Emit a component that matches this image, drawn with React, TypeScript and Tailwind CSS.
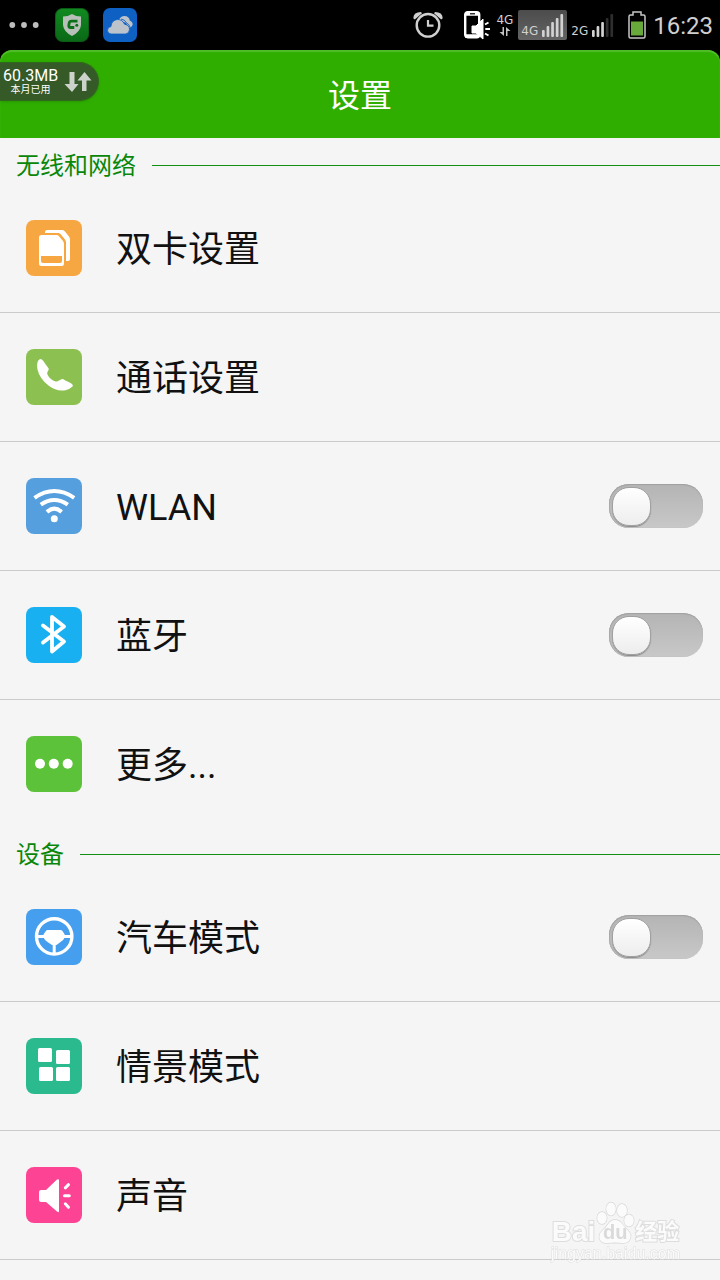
import { ReactNode } from "react";

type Item = {
  id: string;
  label: string;
  color: string;
  icon: ReactNode;
  toggle?: boolean;
};

type Group = { title: string; items: Item[] };

const groups: Group[] = [
  {
    title: "无线和网络",
    items: [
      {
        id: "dual-sim",
        label: "双卡设置",
        color: "bg-[#f7a741]",
        icon: (
          <>
            <path
              d="M19 13V12Q19 10 21 10H36.5Q38 10 39 11.5L43 16.5Q44 18 44 19.5V39Q44 41 42 41H40V22.5Q40 21 39 19.5L34.5 14Q33.5 13 32 13Z"
              fill="#fff"
            />
            <path
              d="M15.5 15H30.5Q32 15 33 16.2L37 21Q38 22.3 38 24V43.5Q38 46 35.5 46H15.5Q13 46 13 43.500V17.5Q13 15 15.500 15Z"
              fill="#fff"
            />
            <path d="M15 36H36V41Q36 43 34 43H17Q15 43 15 41Z" fill="#f7a741" />
          </>
        ),
      },
      {
        id: "call",
        label: "通话设置",
        color: "bg-[#8cc152]",
        icon: (
          <path
            d="M12 12Q13.500 9.500 15.500 10.200Q17.500 11.500 19 14.500L22.700 19.500Q23 21 21.700 22.500Q20.500 24 21.700 26Q24 30.500 29 32.200Q31 33 32.500 31.800L35.500 30.200Q37 29.500 38.500 31L45 34.200Q47.700 36 46.500 37.600Q44 40.200 39.500 41.200Q31 43 22.500 36.500Q13.500 29.500 11.500 20.500Q10.500 15 12 12Z"
            fill="#fff"
          />
        ),
      },
      {
        id: "wlan",
        label: "WLAN",
        color: "bg-[#569fde]",
        toggle: true,
        icon: (
          <g fill="none" stroke="#fff" strokeWidth="4">
            <path d="M8.500 19.800Q28.300 6.200 48.200 19.800" />
            <path d="M14.800 26.700Q28.300 17.300 41.800 26.700" />
            <path d="M21 34Q28.300 27.300 35.600 34" />
            <circle cx="28.300" cy="40.700" r="3.500" fill="#fff" stroke="none" />
          </g>
        ),
      },
      {
        id: "bluetooth",
        label: "蓝牙",
        color: "bg-[#19b0f1]",
        toggle: true,
        icon: (
          <path
            d="M17 18.500L38 34.500L26 44.500V10L38 19.500L17 35.500"
            fill="none"
            stroke="#fff"
            strokeWidth="3.800"
            strokeLinecap="round"
            strokeLinejoin="round"
          />
        ),
      },
      {
        id: "more",
        label: "更多...",
        color: "bg-[#5cc239]",
        icon: (
          <g fill="#fff">
            <circle cx="14" cy="27.800" r="5" />
            <circle cx="27.800" cy="27.800" r="5" />
            <circle cx="41.700" cy="27.800" r="5" />
          </g>
        ),
      },
    ],
  },
  {
    title: "设备",
    items: [
      {
        id: "car",
        label: "汽车模式",
        color: "bg-[#459eee]",
        toggle: true,
        icon: (
          <>
            <g fill="none" stroke="#fff">
              <circle cx="28.200" cy="27.400" r="17.700" strokeWidth="3.400" />
              <path d="M11 27.500H46M28.200 30V45" strokeWidth="3" />
            </g>
            <path
              d="M21.500 21H34.700Q36.200 21 37 22.800L38.700 25.500V28.500Q37.500 31.500 34.500 33L30.500 36H26L21.500 33Q18.500 31 17.500 28.500V25.500L19.300 22.800Q20 21 21.500 21Z"
              fill="#fff"
            />
          </>
        ),
      },
      {
        id: "profiles",
        label: "情景模式",
        color: "bg-[#2aba8e]",
        icon: (
          <g fill="#fff">
            <rect x="12" y="10" width="14" height="14" rx="1.500" />
            <rect x="30" y="12" width="14" height="14" rx="1.500" />
            <rect x="13" y="29" width="14" height="14" rx="1.500" />
            <rect x="30" y="29" width="14" height="14" rx="1.500" />
          </g>
        ),
      },
      {
        id: "sound",
        label: "声音",
        color: "bg-[#fd4393]",
        icon: (
          <>
            <path
              d="M15 23H20L31 12.500Q33 11.500 33 13.500V44Q33 46 31 44.500L20 35H15Q13 35 13 33V25Q13 23 15 23Z"
              fill="#fff"
            />
            <path
              d="M39.300 20.800L42.500 17.700M38.500 28.700H43.300M39.300 36.800L42.500 40.200"
              stroke="#fff"
              strokeWidth="3"
              strokeLinecap="round"
            />
          </>
        ),
      },
    ],
  },
];

function SignalBars({ active }: { active: number }) {
  return (
    <svg width="22" height="24" viewBox="0 0 22 24" aria-hidden="true">
      {[7, 11, 15, 19, 23].map((h, i) => (
        <rect
          key={h}
          x={i * 4.6}
          y={24 - h}
          width="2.700"
          height={h}
          rx="1"
          fill={i < active ? "#d2d2d2" : "#2e2e2e"}
        />
      ))}
    </svg>
  );
}

function StatusBar() {
  return (
    <div className="flex h-[50px] items-center justify-between bg-black pr-[7px] pl-2 text-[#d0d0d0]">
      <div className="flex items-center gap-[14px]">
        <svg width="33" height="34" viewBox="0 0 33 34" aria-hidden="true">
          <g fill="#bdbdbd">
            <circle cx="4.300" cy="17" r="2.900" />
            <circle cx="16" cy="17" r="2.900" />
            <circle cx="27.700" cy="17" r="2.900" />
          </g>
        </svg>
        <svg width="34" height="34" viewBox="0 0 34 34" aria-hidden="true">
          <defs>
            <linearGradient id="shieldBg" x1="0" y1="0" x2="0" y2="1">
              <stop offset="0" stopColor="#118a20" />
              <stop offset="1" stopColor="#0a6817" />
            </linearGradient>
          </defs>
          <rect x="0.500" y="0.500" width="33" height="33" rx="7" fill="url(#shieldBg)" stroke="#0b5c14" />
          <path d="M17 6Q21 8.500 26 8.500V17Q25.500 23.500 17 28Q8.500 23.500 8 17V8.500Q13 8.500 17 6Z" fill="#b9c0b9" />
          <path
            d="M22.500 13.200H16.500Q14.500 13.200 14.200 15L13.800 17.500Q13.600 19.500 15.500 19.500H19.300"
            fill="none"
            stroke="#0c6f19"
            strokeWidth="2.800"
          />
          <circle cx="21.800" cy="17.200" r="1.500" fill="#0c6f19" />
        </svg>
        <svg width="34" height="34" viewBox="0 0 34 34" aria-hidden="true">
          <rect width="34" height="34" rx="7" fill="#0e60c2" />
          <g fill="#bcc3cb">
            <path d="M16 12Q17.500 8 21.500 8Q26 8 26.800 12.500Q29.700 13.500 29.700 16Q29.500 19 26 19.800L23 15Z" />
            <path
              d="M8 26Q4.500 25.500 4.500 22.300Q4.500 19 8 18.500Q8.500 12 14.500 11.500Q19.500 11.500 21.500 16.200Q26.500 17 26.500 21.500Q26.300 25.500 22.500 26Z"
              stroke="#0e60c2"
              strokeWidth="0.800"
            />
          </g>
          <path d="M18 11Q22 11.500 23.500 15Q26 16 27 19" fill="none" stroke="#0e60c2" strokeWidth="0.900" />
        </svg>
      </div>

      <div className="flex items-center">
        <svg width="30" height="28" viewBox="0 0 30 28" aria-hidden="true">
          <g fill="none" stroke="#d0d0d0">
            <circle cx="15" cy="14.300" r="11.300" strokeWidth="2.400" />
            <path d="M15 9V14.700H20.500" strokeWidth="2.200" />
          </g>
          <path d="M0.300 7.300Q0.500 1 8 1L9 2.300L1.800 8.500ZM29.700 7.300Q29.500 1 22 1L21 2.300L28.200 8.500Z" fill="#d0d0d0" />
        </svg>
        <svg className="ml-5" width="28" height="30" viewBox="0 0 28 30" aria-hidden="true">
          <rect x="2.200" y="2.200" width="14" height="25" rx="2.500" fill="#000" stroke="#fff" strokeWidth="2.400" />
          <path d="M2 4H16M2 26H16" stroke="#fff" strokeWidth="3.600" />
          <path d="M7 3.800H12" stroke="#000" strokeWidth="1.200" />
          <path d="M9 16H13L20 9V29L13 23H9Z" fill="#fff" stroke="#fff" strokeWidth="1" />
          <path d="M22 14.500L25.500 12.500M22.300 19H27M22 23.500L25.500 25.500" stroke="#fff" strokeWidth="2" />
        </svg>
        <div className="ml-[5px] flex flex-col items-center font-['DejaVu_Sans',sans-serif] text-xs leading-3">
          <span>4G</span>
          <svg width="12" height="11" viewBox="0 0 12 11" aria-hidden="true">
            <path d="M5 1V10L0.500 6H3.500V1ZM7 10V1L11.500 5H8.500V10Z" fill="#c4c4c4" />
          </svg>
        </div>
        <div className="ml-[5px] flex h-[30px] items-end gap-1 rounded-xs bg-linear-to-b from-[#4c4c4c] to-[#646464] px-[3px] pb-[3px]">
          <span className="font-['DejaVu_Sans',sans-serif] text-xs leading-3">4G</span>
          <SignalBars active={5} />
        </div>
        <div className="ml-1 flex h-[30px] items-end gap-1 pb-[3px]">
          <span className="font-['DejaVu_Sans',sans-serif] text-xs leading-3">2G</span>
          <SignalBars active={3} />
        </div>
        <svg className="ml-[14px]" width="18" height="28" viewBox="0 0 18 28" aria-hidden="true">
          <path
            d="M2.500 4H5V1H13V4H15.500Q17 4 17 5.500V25.500Q17 27 15.500 27H2.500Q1 27 1 25.500V5.500Q1 4 2.500 4Z"
            fill="none"
            stroke="#c6c6c6"
            strokeWidth="1.500"
          />
          <rect x="3" y="10.500" width="12" height="14" fill="#69a83b" />
        </svg>
        <time className="ml-[7px] pt-px text-2xl leading-8">16:23</time>
      </div>
    </div>
  );
}

function UsageBadge() {
  return (
    <div className="absolute top-3 left-0 flex h-[39px] items-center gap-[6px] rounded-r-full border border-l-0 border-[#2f6a1c] bg-[#355a28] pr-[6px] pl-[3px] text-white shadow-sm">
      <div className="flex flex-col items-center">
        <span className="text-base leading-4">60.3MB</span>
        <span className="text-[10px] leading-3">本月已用</span>
      </div>
      <svg width="28" height="22" viewBox="0 0 28 22" aria-hidden="true">
        <path
          d="M5.500 1H10.500V13H14.500L8 21L0.500 13H5.500ZM18 20H22.500V9.500H27.500L20.500 1L13.500 9.500H18Z"
          fill="#cdd3ca"
        />
      </svg>
    </div>
  );
}

function Row({ item, last }: { item: Item; last: boolean }) {
  const body = (
    <>
      <span className={`size-14 shrink-0 overflow-hidden rounded-lg ${item.color}`}>
        <svg viewBox="0 0 56 56" className="size-14" aria-hidden="true">
          {item.icon}
        </svg>
      </span>
      <span className="grow pt-1 text-left text-4xl leading-[48px] text-[#111111]">{item.label}</span>
    </>
  );
  return (
    <li className={last ? "" : "border-b border-[#cbcbcb]"}>
      {item.toggle ? (
        <label htmlFor={item.id} className="flex h-32 items-center gap-[34px] pr-[17px] pl-[26px]">
          {body}
          <input
            id={item.id}
            type="checkbox"
            role="switch"
            className="flex h-11 w-[94px] shrink-0 appearance-none items-center rounded-[20px] bg-linear-to-b from-[#b4b4b4] to-[#c8c8c8] px-[3px] shadow-[inset_0_1px_1px_#a0a0a0,inset_1px_0_1px_#a8a8a8] before:h-[39px] before:w-[39px] before:rounded-[17px] before:border before:border-[#a0a0a0] before:bg-linear-to-b before:from-white before:to-[#ededed] before:shadow-[0_1px_1px_#888888] checked:justify-end checked:from-[#2fae00] checked:to-[#43c313]"
          />
        </label>
      ) : (
        <button type="button" className="flex h-32 w-full items-center gap-[34px] pr-[17px] pl-[26px]">
          {body}
        </button>
      )}
    </li>
  );
}

function Watermark() {
  const outlined = "text-[#fbfbfb] [-webkit-text-stroke:2px_#dddddd] [paint-order:stroke_fill]";
  return (
    <div
      className={`pointer-events-none fixed right-10 bottom-[18px] flex flex-col items-center font-['Liberation_Sans','Noto_Sans_CJK_SC',sans-serif] ${outlined}`}
    >
      <div className="flex items-end font-bold">
        <span className="text-[28px] leading-7">Bai</span>
        <span className="relative">
          <svg width="40" height="46" viewBox="0 0 40 46" aria-hidden="true">
            <g fill="#fbfbfb" stroke="#d8d8d8" strokeWidth="1.300">
              <ellipse cx="7" cy="18" rx="4.800" ry="6" />
              <ellipse cx="16" cy="9" rx="4.800" ry="6.500" />
              <ellipse cx="27" cy="10.500" rx="5" ry="6.500" />
              <ellipse cx="34" cy="20.500" rx="4.800" ry="6" />
              <path d="M20 20Q25 20 28 25Q30 28 33 30.500Q37 35 35 39Q33 43.300 28 43L20 42.500L12 43Q6 43.300 4.500 38.500Q3.500 34 7.500 30.500Q10 28.500 12.500 25Q15.500 20 20 20Z" />
            </g>
          </svg>
          <span className="absolute inset-x-0 bottom-0 text-center text-xl leading-7 text-[#dadada] [-webkit-text-stroke:0px]">
            du
          </span>
        </span>
        <span className="text-[22px] leading-7">经验</span>
      </div>
      <span className="text-base leading-4 [-webkit-text-stroke:1px_#dddddd]">jingyan.baidu.com</span>
    </div>
  );
}

export default function App() {
  return (
    <div className="min-h-screen bg-[#f5f5f5] font-[Roboto,'Noto_Sans_CJK_SC',sans-serif]">
      <StatusBar />
      <div className="bg-black">
        <header className="relative flex h-[88px] items-center justify-center rounded-t-xl bg-[#2fae00] shadow-[inset_0_2px_1px_#52bd2b]">
          <h1 className="pt-[3px] text-[32px] leading-10 text-white">设置</h1>
          <UsageBadge />
        </header>
      </div>
      <main className="pt-px">
        {groups.map((group) => (
          <section key={group.title}>
            <div className="flex h-[45px] items-center gap-4 pt-2 pl-4">
              <h2 className="text-2xl leading-8 text-[#0a870a]">{group.title}</h2>
              <div className="h-px grow bg-[#129212]" />
            </div>
            <ul>
              {group.items.map((item, i) => (
                <Row
                  key={item.id}
                  item={item}
                  last={group === groups[0] && i === group.items.length - 1}
                />
              ))}
            </ul>
          </section>
        ))}
      </main>
      <Watermark />
    </div>
  );
}
